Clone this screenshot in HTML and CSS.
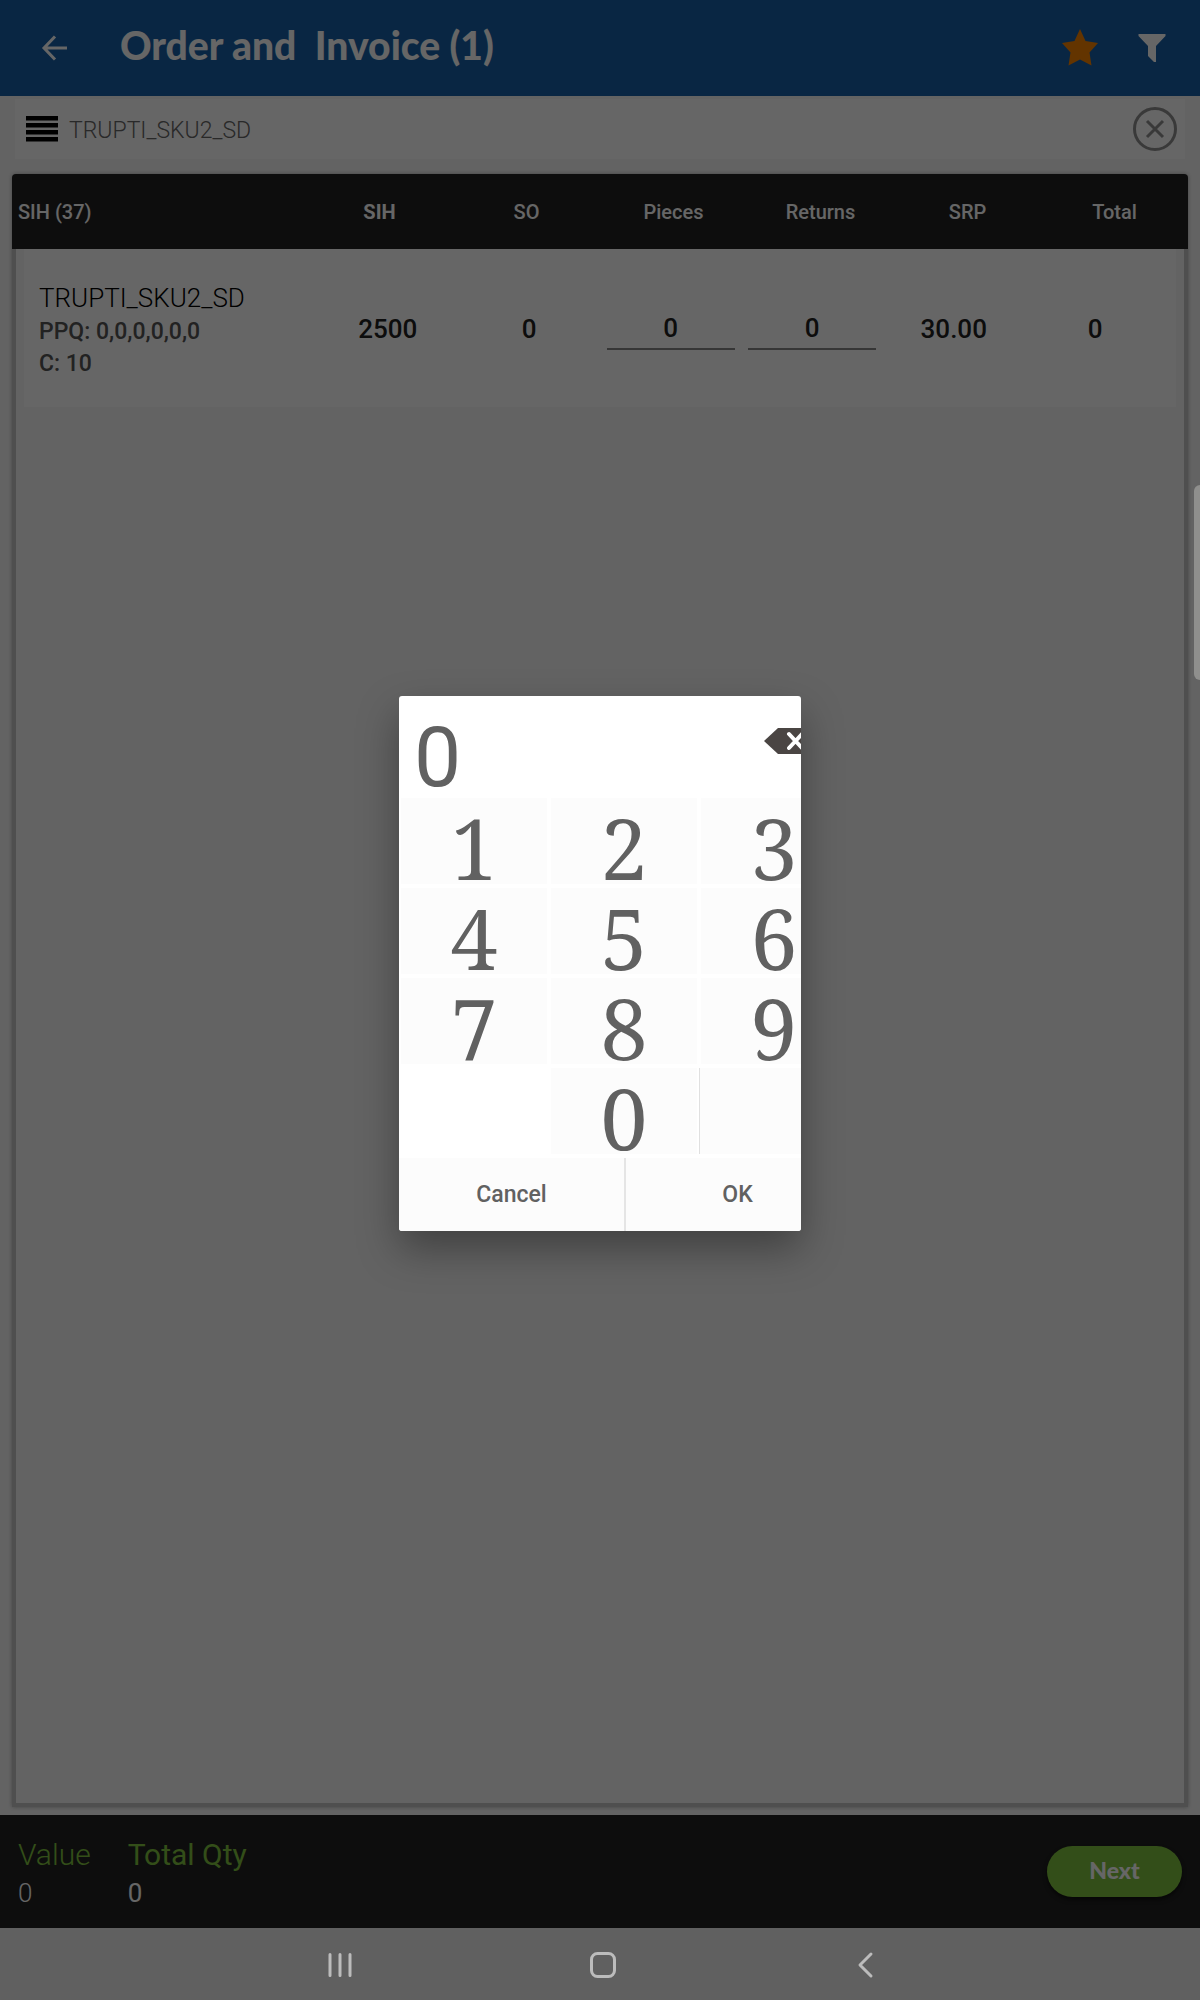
FILE: index.html
```html
<!DOCTYPE html>
<html lang="en">
<head>
<meta charset="utf-8">
<meta name="viewport" content="width=device-width, initial-scale=1">
<title>Order and Invoice</title>
<link rel="stylesheet" href="styles.css">
</head>
<body>
<div class="screen">
  <header class="app-bar">
    <button class="icon-btn" aria-label="Back">
      <svg width="28" height="28" viewBox="0 0 28 28" fill="none" stroke="#fff" stroke-width="3"><path d="M26 14H4M14 2.500L3 14l11 11.500"/></svg>
    </button>
    <h1 class="app-title">Order and&nbsp; Invoice (1)</h1>
    <button class="icon-btn" aria-label="Favourite">
      <svg width="36" height="36" viewBox="0 0 36 36" fill="#f88200"><path d="M18 -1l5.500 12L36 13l-8.500 9.500 2 13L18 29.500 6.500 35.500l2-13L0 13l12.500-2z"/></svg>
    </button>
    <button class="icon-btn" aria-label="Filter">
      <svg width="28" height="28" viewBox="0 0 28 28" fill="#fff"><path d="M.500 0h27v2L18 12v16h-2l-6-6V12L.500 2z"/></svg>
    </button>
  </header>

  <div class="search">
    <svg class="search-icon" width="32" height="26" viewBox="0 0 32 26" fill="#000"><path d="M0 0h32v4.500H0zM0 7h32v4.500H0zM0 14h32v4.500H0zM0 21h32v4.500H0z"/></svg>
    <input class="search-input" type="text" value="TRUPTI_SKU2_SD" aria-label="Search product">
    <button class="icon-btn" aria-label="Clear search">
      <svg width="44" height="44" viewBox="0 0 44 44" fill="none" stroke="#909090" stroke-width="3"><circle cx="22" cy="22" r="20.500"/><path d="M14 14l16 16M30 14L14 30"/></svg>
    </button>
  </div>

  <main class="card">
    <table class="orders">
      <thead>
        <tr class="head-row">
          <th class="head-first">SIH (37)</th><th class="sorted">SIH</th><th>SO</th><th>Pieces</th><th>Returns</th><th>SRP</th><th>Total</th>
        </tr>
      </thead>
      <tbody>
        <tr class="item-row">
          <td class="product">
            <span class="product-name">TRUPTI_SKU2_SD</span>
            <span>PPQ: 0,0,0,0,0,0</span>
            <span>C: 10</span>
          </td>
          <td>2500</td>
          <td>0</td>
          <td><input class="qty" type="text" value="0" aria-label="Pieces"></td>
          <td><input class="qty" type="text" value="0" aria-label="Returns"></td>
          <td>30.00</td>
          <td>0</td>
        </tr>
      </tbody>
    </table>
  </main>

  <footer class="totals">
    <dl class="total total-light"><dt>Value</dt><dd>0</dd></dl>
    <dl class="total"><dt>Total Qty</dt><dd>0</dd></dl>
    <button class="next">Next</button>
  </footer>

  <div class="scrim">
    <div class="dialog" role="dialog" aria-label="Enter quantity">
      <div class="keypad">
        <div class="display">
          <output class="display-value">0</output>
          <button class="icon-btn" aria-label="Delete digit">
            <svg width="48" height="26" viewBox="0 0 48 26"><path fill="#4a4543" d="M0 13L14 0h34v26H14z"/><path d="M25 6l13 14M38 6L25 20" fill="none" stroke="#fff" stroke-width="4" stroke-linecap="round"/></svg>
          </button>
        </div>
        <div class="keys">
          <button class="key">1</button><button class="key">2</button><button class="key">3</button>
          <button class="key">4</button><button class="key">5</button><button class="key">6</button>
          <button class="key">7</button><button class="key">8</button><button class="key">9</button>
          <span></span><button class="key">0</button><button class="key key-blank" aria-label="Blank"></button>
        </div>
        <div class="actions">
          <button class="action">Cancel</button><button class="action">OK</button>
        </div>
      </div>
    </div>
  </div>
</div>

<nav class="nav-bar">
  <button class="icon-btn" aria-label="Recent apps">
    <svg width="26" height="26" viewBox="0 0 26 26" stroke="#bcbcbc" stroke-width="3" stroke-linecap="round"><path d="M3 2.500v21M13 2.500v21M23 2.500v21"/></svg>
  </button>
  <button class="icon-btn" aria-label="Home">
    <svg width="26" height="26" viewBox="0 0 26 26" fill="none" stroke="#bcbcbc" stroke-width="3"><rect x="1.500" y="1.500" width="23" height="23" rx="6"/></svg>
  </button>
  <button class="icon-btn" aria-label="Back">
    <svg width="26" height="26" viewBox="0 0 26 26" fill="none" stroke="#bcbcbc" stroke-width="3" stroke-linecap="round" stroke-linejoin="round"><path d="M18 2L7 13l11 11"/></svg>
  </button>
</nav>
<div class="edge-handle"></div>
</body>
</html>
```
FILE: styles.css
```css
* {
  box-sizing: border-box;
}

body {
  margin: 0;
  min-height: 100vh;
  display: flex;
  flex-direction: column;
  font-family: Roboto, sans-serif;
  background: #606060;
}

button,
input {
  font: inherit;
  color: inherit;
  border: 0;
  padding: 0;
  margin: 0;
  background: none;
}

svg {
  display: block;
  overflow: visible;
}

.icon-btn {
  flex: none;
}

.screen {
  position: relative;
  flex: 1;
  display: flex;
  flex-direction: column;
  background: #f8f8f8;
}

/* Top bar */
.app-bar {
  display: flex;
  align-items: center;
  gap: 40px;
  height: 96px;
  padding: 0 34px 0 41px;
  background: #1760a8;
  color: #fff;
}

.app-title {
  flex: 1;
  margin: 0 0 0 11px;
  padding-bottom: 6px;
  font-family: Lato, sans-serif;
  font-size: 39px;
  font-weight: 900;
  line-height: 48px;
}

/* Search */
.search {
  display: flex;
  align-items: center;
  gap: 11px;
  height: 60px;
  margin: 3px 15px 15px;
  padding: 0 8px 0 11px;
  background: #fff;
}

.search-input {
  flex: 1;
  min-width: 0;
  padding-top: 2px;
  font-size: 23px;
  font-weight: 300;
  color: #666;
}

/* Order table */
.card {
  flex: 1;
  margin: 0 12px 8px;
  border: 4px solid #c6c6c6;
  border-top: 0;
  border-radius: 4px 4px 0 0;
  box-shadow: 0 0 4px #aaa;
}

.orders,
.orders thead,
.orders tbody {
  display: block;
}

.head-row,
.item-row {
  display: grid;
  grid-template-columns: 2fr repeat(6, 1fr);
  align-items: center;
  text-align: center;
}

.head-row {
  height: 75px;
  margin: 0 -4px;
  border-radius: 4px 4px 0 0;
  background: #212121;
  color: #fff;
  font-size: 20px;
}

.head-row th {
  padding: 0;
  font-weight: 500;
}

.head-row .head-first {
  padding-left: 6px;
  text-align: left;
}

.head-row .sorted {
  font-weight: 700;
}

.item-row {
  min-height: 158px;
  margin: 0 8px;
  padding: 2px 10px 0;
  background: #fff;
  color: #212121;
  font-size: 26px;
  font-weight: 500;
}

.item-row td {
  padding: 0;
}

.item-row .product {
  display: flex;
  flex-direction: column;
  padding: 2px 0 0 5px;
  text-align: left;
  font-size: 23px;
  line-height: 32px;
  color: #555;
}

.product .product-name {
  font-size: 26px;
  font-weight: 300;
  line-height: 35px;
  color: #000;
}

.qty {
  width: 128px;
  max-width: 92%;
  height: 42px;
  border-bottom: 2px solid #888;
  text-align: center;
}

/* Totals */
.totals {
  display: flex;
  align-items: center;
  gap: 37px;
  min-height: 113px;
  padding: 0 18px;
  background: #212121;
  color: #fff;
}

.total {
  margin: 0;
  padding-top: 4px;
  font-size: 26px;
  line-height: 38px;
}

.total dt {
  font-size: 30px;
  color: #80c33f;
}

.total dd {
  margin: 0;
}

.total-light {
  font-weight: 300;
}

.next {
  width: 135px;
  height: 51px;
  margin-left: auto;
  padding-bottom: 4px;
  border-radius: 26px;
  background: #80c33f;
  box-shadow: 0 3px 4px #0008;
  font-family: Lato, sans-serif;
  font-size: 23px;
  font-weight: 900;
}

/* Number entry dialog */
.scrim {
  position: absolute;
  inset: 0;
  display: grid;
  place-items: center;
  padding-bottom: 2px;
  background: rgba(0, 0, 0, 0.6);
}

.dialog {
  width: 402px;
  overflow: hidden;
  border-radius: 3px;
  background: #fff;
  box-shadow: 0 18px 40px rgba(0, 0, 0, 0.35);
  color: #616161;
}

.keypad {
  width: 450px;
}

.display {
  display: flex;
  align-items: flex-start;
  justify-content: space-between;
  height: 102px;
  padding: 32px 37px 0 15px;
}

.display-value {
  font-size: 84px;
  line-height: 60px;
}

.keys {
  display: grid;
  grid-template-columns: repeat(3, 1fr);
  grid-auto-rows: 86px;
  row-gap: 4px;
}

.key {
  padding-top: 14px;
  border: solid #fff;
  border-width: 0 2px;
  background: #fcfcfc;
  font-family: "Noto Serif", "Liberation Serif", serif;
  font-size: 84px;
  line-height: 72px;
}

.key-blank {
  border-left: 1px solid #e0e0e0;
}

.actions {
  display: grid;
  grid-template-columns: 1fr 1fr;
  height: 73px;
  margin-top: 4px;
}

.action {
  background: #fcfcfc;
  font-size: 23px;
  font-weight: 500;
}

.action + .action {
  border-left: 2px solid #e5e5e5;
}

/* System navigation */
.nav-bar {
  display: flex;
  justify-content: center;
  align-items: center;
  gap: 237px;
  height: 72px;
  padding: 2px 0 0 6px;
  background: #606060;
}

.edge-handle {
  position: fixed;
  top: 485px;
  right: 0;
  width: 6px;
  height: 195px;
  border-radius: 6px 0 0 6px;
  background: #8f8f8d;
}
```
